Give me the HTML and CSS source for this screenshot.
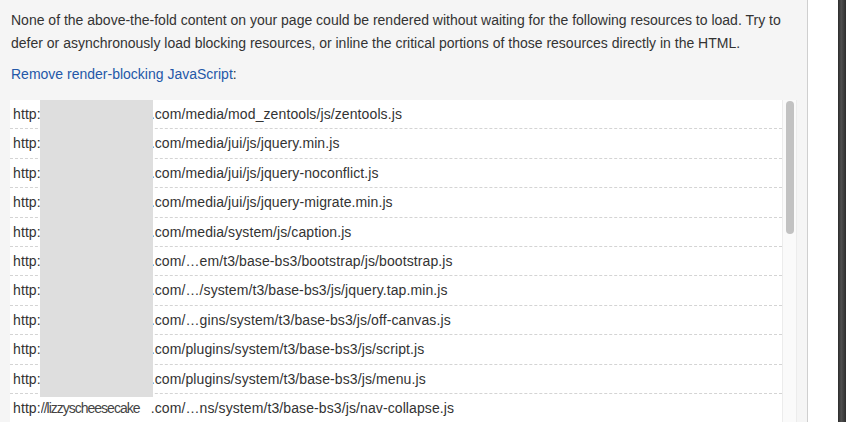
FILE: index.html
```html
<!DOCTYPE html>
<html lang="en">
<head>
  <title>Render-blocking resources</title>
  <meta charset="utf-8">
  <link rel="stylesheet" href="styles.css">
</head>
<body>
  <div class="page">
    <div class="panel">
      <p class="intro">None of the above-the-fold content on your page could be rendered without waiting for the following resources to load. Try to defer or asynchronously load blocking resources, or inline the critical portions of those resources directly in the HTML.</p>
      <p class="heading"><a href="#">Remove render-blocking JavaScript</a>:</p>
      <div class="listbox">
        <ul class="urls">
          <li>http:<span class="host">//lizzyscheesecake</span>.com/media/mod_zentools/js/zentools.js</li>
          <li>http:<span class="host">//lizzyscheesecake</span>.com/media/jui/js/jquery.min.js</li>
          <li>http:<span class="host">//lizzyscheesecake</span>.com/media/jui/js/jquery-noconflict.js</li>
          <li>http:<span class="host">//lizzyscheesecake</span>.com/media/jui/js/jquery-migrate.min.js</li>
          <li>http:<span class="host">//lizzyscheesecake</span>.com/media/system/js/caption.js</li>
          <li>http:<span class="host">//lizzyscheesecake</span>.com/…em/t3/base-bs3/bootstrap/js/bootstrap.js</li>
          <li>http:<span class="host">//lizzyscheesecake</span>.com/…/system/t3/base-bs3/js/jquery.tap.min.js</li>
          <li>http:<span class="host">//lizzyscheesecake</span>.com/…gins/system/t3/base-bs3/js/off-canvas.js</li>
          <li>http:<span class="host">//lizzyscheesecake</span>.com/plugins/system/t3/base-bs3/js/script.js</li>
          <li>http:<span class="host">//lizzyscheesecake</span>.com/plugins/system/t3/base-bs3/js/menu.js</li>
          <li>http:<span class="host">//lizzyscheesecake</span>.com/…ns/system/t3/base-bs3/js/nav-collapse.js</li>
        </ul>
        <div class="track"><div class="thumb"></div></div>
        <div class="redact"></div>
      </div>
    </div>
    <div class="margin"></div>
    <div class="frame"></div>
  </div>
</body>
</html>
```

FILE: styles.css
```css
body {
  margin: 0;
  font-family: "Liberation Sans", Arial, sans-serif;
  font-size: 14px;
  color: #333;
  background: #fff;
  overflow: hidden;
}
.page {
  display: flex;
  height: 422px;
}
.panel {
  width: 797px;
  flex: none;
  padding: 9px 0 0 10px;
  background-color: #f5f5f5;
  border-right: 1px solid #cfcfcf;
  overflow: hidden;
}
.intro {
  margin: 0 0 0 1px;
  line-height: 23px;
  padding-right: 14px;
}
.heading {
  margin: 8px 0 0 1px;
  line-height: 23px;
}
.heading a {
  color: #2458a8;
  text-decoration: none;
}
.listbox {
  position: relative;
  display: flex;
  margin-top: 14px;
  width: 787px;
  height: 330px;
  background: #fff;
}
.urls {
  flex: 1;
  list-style: none;
  margin: 0;
  padding: 0;
}
.urls li {
  height: 28.4px;
  line-height: 28.4px;
  padding-left: 3px;
  border-bottom: 1px dashed #d4d4d4;
  white-space: nowrap;
  letter-spacing: 0.1px;
}
.host {
  display: inline-block;
  width: 110px;
  overflow: hidden;
  vertical-align: top;
  color: #444;
  letter-spacing: -1px;
}
.track {
  width: 13px;
  flex: none;
  background: #fafafa;
  border-left: 1px solid #ececec;
  border-right: 1px solid #ececec;
}
.thumb {
  width: 8px;
  height: 133px;
  margin: 1px 0 0 3px;
  border-radius: 4px;
  background: #c2c2c2;
}
.redact {
  position: absolute;
  left: 30px;
  top: 0;
  width: 113px;
  height: 297px;
  background: #dedede;
}
.margin {
  width: 30px;
  flex: none;
}
.frame {
  flex: 1;
  background: linear-gradient(to right, #2b2b2b, #505050 40%, #2e2e2e);
}
```
